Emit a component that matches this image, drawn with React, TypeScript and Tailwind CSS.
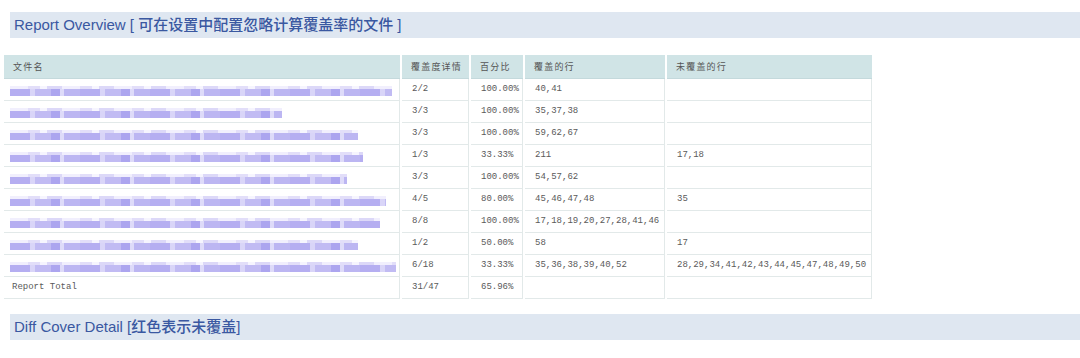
const rows = [
  { bar: 382, detail: "2/2", pct: "100.00%", covered: "40,41", missed: "" },
  { bar: 272, detail: "3/3", pct: "100.00%", covered: "35,37,38", missed: "" },
  { bar: 348, detail: "3/3", pct: "100.00%", covered: "59,62,67", missed: "" },
  { bar: 353, detail: "1/3", pct: "33.33%", covered: "211", missed: "17,18" },
  { bar: 337, detail: "3/3", pct: "100.00%", covered: "54,57,62", missed: "" },
  { bar: 376, detail: "4/5", pct: "80.00%", covered: "45,46,47,48", missed: "35" },
  { bar: 370, detail: "8/8", pct: "100.00%", covered: "17,18,19,20,27,28,41,46", missed: "" },
  { bar: 348, detail: "1/2", pct: "50.00%", covered: "58", missed: "17" },
  {
    bar: 386,
    detail: "6/18",
    pct: "33.33%",
    covered: "35,36,38,39,40,52",
    missed: "28,29,34,41,42,43,44,45,47,48,49,50",
  },
];

const heads = [
  { label: "文件名", w: "w-[396px]" },
  { label: "覆盖度详情", w: "w-[67px]" },
  { label: "百分比", w: "w-[52px]" },
  { label: "覆盖的行", w: "w-[140px]" },
  { label: "未覆盖的行", w: "w-[205px]" },
];

// 打码的文件名
function Blurred({ width }: { width: number }) {
  return (
    <div className="flex flex-col pt-[2px] blur-[0.6px]" style={{ width }}>
      <div className="h-[3px] w-full bg-[repeating-linear-gradient(90deg,#f1effd_0_18px,#e2def9_18px_30px,#f6f5fe_30px_37px,#dcd8f8_37px_52px)]" />
      <div className="h-[7px] w-full bg-[repeating-linear-gradient(90deg,#b5aef1_0_20px,#d9d5f8_20px_25px,#c1bbf3_25px_41px,#aca5ef_41px_50px,#dedbf9_50px_54px,#bcb6f2_54px_70px)]" />
    </div>
  );
}

function SectionTitle({ children }: { children: React.ReactNode }) {
  return (
    <div className="ml-[10px] h-[26px] bg-[#dfe7f1] pl-[4px] flex items-center text-[15px] font-[500] text-[#3a58a1] font-['Liberation_Sans','Noto_Sans_CJK_SC',sans-serif]">
      {children}
    </div>
  );
}

export default function App() {
  const cell =
    "h-[22px] border-b border-r border-[#e2e9e9] px-[10px] text-[9px] text-[#5a5a5a] align-middle whitespace-nowrap overflow-hidden";
  return (
    <div className="w-[1080px] h-[358px] bg-white overflow-hidden pt-[12px] font-['Liberation_Mono','Noto_Sans_CJK_SC',monospace]">
      <SectionTitle>Report Overview [ 可在设置中配置忽略计算覆盖率的文件 ]</SectionTitle>

      <table className="table-fixed w-[872px] ml-[2px] mt-[17px] border-separate border-spacing-x-[2px] border-spacing-y-0">
        <thead>
          <tr>
            {heads.map((h) => (
              <th
                key={h.label}
                className={
                  h.w +
                  " h-[24px] bg-[#d0e4e6] border-b border-[#c4d9dc] px-[9px] text-left font-normal text-[9px] tracking-[1.2px] whitespace-nowrap text-[#555] font-['Noto_Sans_CJK_SC',sans-serif] align-middle"
                }
              >
                {h.label}
              </th>
            ))}
          </tr>
        </thead>
        <tbody>
          {rows.map((r, i) => (
            <tr key={i}>
              <td className={cell + " pl-[6px]"}>
                <Blurred width={r.bar} />
              </td>
              <td className={cell}>{r.detail}</td>
              <td className={cell}>{r.pct}</td>
              <td className={cell}>{r.covered}</td>
              <td className={cell}>{r.missed}</td>
            </tr>
          ))}
          <tr>
            <td className={cell + " pl-[8px]"}>Report Total</td>
            <td className={cell}>31/47</td>
            <td className={cell}>65.96%</td>
            <td className={cell}></td>
            <td className={cell}></td>
          </tr>
        </tbody>
      </table>

      <div className="mt-[15px]">
        <SectionTitle>Diff Cover Detail [红色表示未覆盖]</SectionTitle>
      </div>
    </div>
  );
}
